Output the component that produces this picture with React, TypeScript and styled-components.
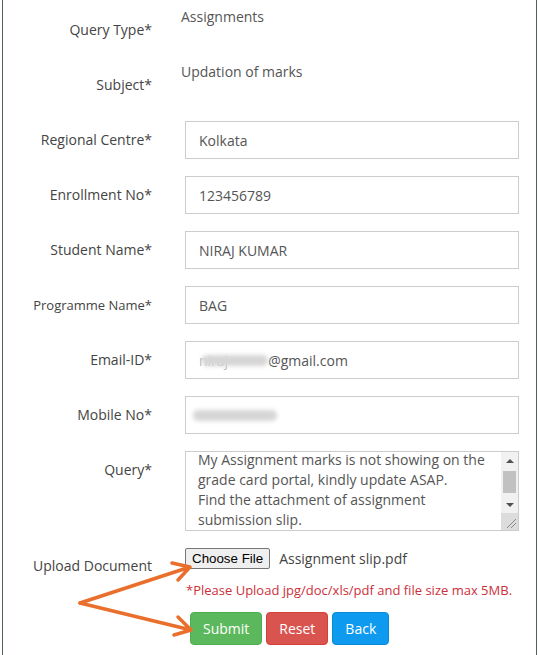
import React, { useEffect, useRef } from "react";
import styled, { createGlobalStyle } from "styled-components";

const Global = createGlobalStyle`
  html, body { margin: 0; padding: 0; background: #fff; }
  body { font-family: "Open Sans", "Liberation Sans", sans-serif; }
`;

const Page = styled.div`
  position: relative;
  margin-left: 2px;
  width: 535px;
  height: 655px;
  box-sizing: border-box;
  border-left: 1px solid #51605d;
  border-right: 1px solid #51605d;
  padding: 11px 16px 0 0;
  display: flex;
  flex-direction: column;
  gap: 17px;
`;

const Row = styled.div`
  display: grid;
  grid-template-columns: 149px 334px;
  column-gap: 33px;
  align-items: start;
  min-height: 38px;
`;

const Label = styled.label<{ $small?: boolean; $top?: number }>`
  text-align: right;
  font-size: ${(p) => (p.$small ? "13px" : "14px")};
  line-height: 20px;
  padding-top: ${(p) => p.$top ?? 9}px;
  color: #444;
  white-space: nowrap;
`;

const StaticValue = styled.div`
  font-size: 14px;
  line-height: 20px;
  color: #555;
  margin: -4px 0 0 -4px;
`;

const Field = styled.div`
  box-sizing: border-box;
  height: 38px;
  border: 1px solid #ccc;
  padding: 0 13px;
  display: flex;
  align-items: center;
  font-size: 14px;
  color: #555;
  background: #fff;
`;

const Redacted = styled.span<{ $w: number }>`
  display: inline-block;
  width: ${(p) => p.$w}px;
  height: 11px;
  border-radius: 5px;
  background: #d6d6d6;
  filter: blur(2px);
`;

const Faint = styled.span`
  color: #bbb;
  filter: blur(0.6px);
  margin-right: -26px;
`;

const AreaFrame = styled.div`
  box-sizing: border-box;
  width: 334px;
  height: 80px;
  border: 1px solid #ccc;
  display: flex;
  background: #fff;
`;

const Area = styled.textarea`
  flex: 1;
  min-width: 0;
  box-sizing: border-box;
  height: 100%;
  border: none;
  padding: 6px 4px 6px 12px;
  font-family: "Open Sans", "Liberation Sans", sans-serif;
  font-size: 14px;
  line-height: 20px;
  color: #555;
  resize: none;
  overflow-y: scroll;
  scrollbar-width: none;
  outline: none;
  display: block;
  background: transparent;
`;

const ScrollBar = styled.div`
  width: 17px;
  display: flex;
  flex-direction: column;
  background: #f1f1f1;
`;

const ScrollBtn = styled.div<{ $down?: boolean }>`
  height: 17px;
  display: flex;
  align-items: center;
  justify-content: center;
  &::after {
    content: "";
    width: 0;
    height: 0;
    border-left: 4px solid transparent;
    border-right: 4px solid transparent;
    ${(p) =>
      p.$down
        ? "border-top: 4px solid #505050;"
        : "border-bottom: 4px solid #505050;"}
  }
`;

const Track = styled.div`
  flex: 1;
  padding: 2px 2px 0;
`;

const Thumb = styled.div`
  height: 22px;
  background: #c1c1c1;
`;

const Corner = styled.div`
  height: 17px;
  background: #dcdcdc;
  display: flex;
  align-items: flex-end;
  justify-content: flex-end;
`;

const UploadCol = styled.div`
  display: flex;
  flex-direction: column;
`;

const FileLine = styled.div`
  display: flex;
  align-items: center;
  gap: 9px;
  height: 21px;
`;

const ChooseButton = styled.button`
  box-sizing: border-box;
  height: 21px;
  padding: 0 6px;
  border: 1px solid #767676;
  border-radius: 2px;
  background: #efefef;
  font-family: "Liberation Sans", Arial, sans-serif;
  font-size: 13.33px;
  color: #000;
`;

const FileName = styled.span`
  font-size: 14px;
  color: #444;
`;

const Hint = styled.div`
  margin-top: 12px;
  font-size: 13px;
  line-height: 18px;
  color: #cc2f3a;
  margin-left: 1px;
  white-space: nowrap;
`;

const Buttons = styled.div`
  margin-top: 13px;
  padding-left: 5px;
  display: flex;
  gap: 4px;
`;

const Btn = styled.button<{ $bg: string; $bd: string }>`
  box-sizing: border-box;
  height: 33px;
  padding: 0 12px;
  border: 1px solid ${(p) => p.$bd};
  border-radius: 4px;
  background: ${(p) => p.$bg};
  color: #fff;
  font-family: "Open Sans", "Liberation Sans", sans-serif;
  font-size: 14px;
`;

const Overlay = styled.svg`
  position: absolute;
  left: 0;
  top: 0;
  width: 100%;
  height: 100%;
  pointer-events: none;
`;

const fields: { label: string; value: string; small?: boolean }[] = [
  { label: "Regional Centre*", value: "Kolkata" },
  { label: "Enrollment No*", value: "123456789" },
  { label: "Student Name*", value: "NIRAJ KUMAR" },
  { label: "Programme Name*", value: "BAG", small: true },
];

export default function App() {
  const ref = useRef<HTMLTextAreaElement>(null);
  useEffect(() => {
    if (ref.current) ref.current.scrollTop = 8;
  }, []);

  return (
    <>
      <Global />
      <Page>
        <Row>
          <Label>Query Type*</Label>
          <StaticValue>Assignments</StaticValue>
        </Row>
        <Row>
          <Label>Subject*</Label>
          <StaticValue>Updation of marks</StaticValue>
        </Row>
        {fields.map((f) => (
          <Row key={f.label}>
            <Label $small={f.small}>{f.label}</Label>
            <Field>{f.value}</Field>
          </Row>
        ))}
        <Row>
          <Label>Email-ID*</Label>
          <Field>
            <Faint>niraj</Faint>
            <Redacted $w={66} />
            <span>@gmail.com</span>
          </Field>
        </Row>
        <Row>
          <Label>Mobile No*</Label>
          <Field>
            <Redacted $w={84} style={{ marginLeft: -6 }} />
          </Field>
        </Row>
        <Row>
          <Label>Query*</Label>
          <AreaFrame>
            <Area
              ref={ref}
              readOnly
              defaultValue={
                "My Assignment marks is not showing on the grade card portal, kindly update ASAP.\nFind the attachment of assignment submission slip."
              }
            />
            <ScrollBar>
              <ScrollBtn />
              <Track>
                <Thumb />
              </Track>
              <ScrollBtn $down />
              <Corner>
                <svg width="17" height="17" viewBox="0 0 17 17">
                  <path d="M6 15 L15 6 M10 15 L15 10" stroke="#8a8a8a" strokeWidth="1" />
                </svg>
              </Corner>
            </ScrollBar>
          </AreaFrame>
        </Row>
        <Row>
          <Label $top={8}>Upload Document</Label>
          <UploadCol>
            <FileLine>
              <ChooseButton>Choose File</ChooseButton>
              <FileName>Assignment slip.pdf</FileName>
            </FileLine>
            <Hint>*Please Upload jpg/doc/xls/pdf and file size max 5MB.</Hint>
            <Buttons>
              <Btn $bg="#5cb85c" $bd="#4cae4c">Submit</Btn>
              <Btn $bg="#d9534f" $bd="#d43f3a">Reset</Btn>
              <Btn $bg="#0e9bef" $bd="#0b8ad6">Back</Btn>
            </Buttons>
          </UploadCol>
        </Row>
        <Overlay viewBox="0 0 533 655">
          <g fill="none" stroke="#ea6f2c" strokeWidth={3.5} strokeLinecap="round" strokeLinejoin="round">
            <path d="M77 603 L187 567 M169 563 L187 567 L175 580" />
            <path d="M77 603 L188 630 M175 617 L188 630 L171 635" />
          </g>
        </Overlay>
      </Page>
    </>
  );
}
